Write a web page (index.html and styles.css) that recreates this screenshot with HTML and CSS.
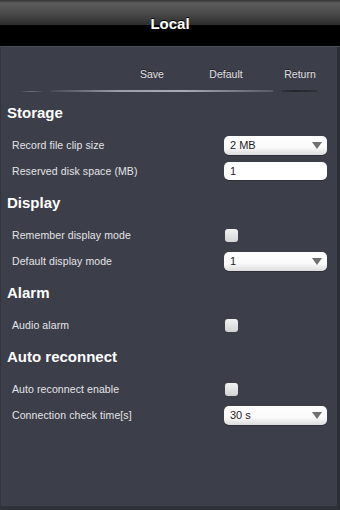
FILE: index.html
```html
<!DOCTYPE html>
<html>
<head>
<meta charset="utf-8">
<link rel="stylesheet" href="styles.css">
</head>
<body>
<div class="app">
  <header class="titlebar"><span class="title">Local</span></header>
  <main class="panel">
    <nav class="toolbar">
      <span class="tb-btn">Save</span>
      <span class="tb-btn">Default</span>
      <span class="tb-btn">Return</span>
    </nav>
    <div class="divider">
      <span class="seg seg-a"></span>
      <span class="seg seg-b"></span>
      <span class="seg seg-c"></span>
    </div>

    <section class="group">
      <h2 class="group-title">Storage</h2>
      <div class="row">
        <span class="label">Record file clip size</span>
        <div class="control"><div class="select"><span>2 MB</span><i class="arrow"></i></div></div>
      </div>
      <div class="row">
        <span class="label">Reserved disk space (MB)</span>
        <div class="control"><div class="input">1</div></div>
      </div>
    </section>

    <section class="group">
      <h2 class="group-title">Display</h2>
      <div class="row">
        <span class="label">Remember display mode</span>
        <div class="control"><span class="check"></span></div>
      </div>
      <div class="row">
        <span class="label">Default display mode</span>
        <div class="control"><div class="select"><span>1</span><i class="arrow"></i></div></div>
      </div>
    </section>

    <section class="group">
      <h2 class="group-title">Alarm</h2>
      <div class="row">
        <span class="label">Audio alarm</span>
        <div class="control"><span class="check"></span></div>
      </div>
    </section>

    <section class="group">
      <h2 class="group-title">Auto reconnect</h2>
      <div class="row">
        <span class="label">Auto reconnect enable</span>
        <div class="control"><span class="check"></span></div>
      </div>
      <div class="row">
        <span class="label">Connection check time[s]</span>
        <div class="control"><div class="select"><span>30 s</span><i class="arrow"></i></div></div>
      </div>
    </section>
  </main>
</div>
</body>
</html>
```

FILE: styles.css
```css
* { box-sizing: border-box; }
html, body { margin: 0; padding: 0; }
body {
  width: 340px;
  height: 510px;
  overflow: hidden;
  background: #2b2d34;
  font-family: "Liberation Sans", Arial, Helvetica, sans-serif;
}
.app {
  display: flex;
  flex-direction: column;
  height: 510px;
}
.titlebar {
  height: 47px;
  flex: none;
  display: flex;
  align-items: center;
  justify-content: center;
  background: linear-gradient(#333 0, #5c5c5c 3px, #494949 30%, #2c2c2c 54%, #000 54%, #000 100%);
  border-bottom: 1px solid #4a4d58;
}
.title {
  color: #fff;
  font-weight: bold;
  font-size: 15px;
  text-shadow: 0 -1px 0 #000;
  padding-top: 1px;
}
.panel {
  flex: 1;
  background: #3c3e49;
  border-left: 1px solid #33353e;
  border-right: 3px solid #2c2e35;
  border-bottom: 4px solid #30323a;
}
.toolbar {
  height: 41px;
  display: flex;
  justify-content: flex-end;
  align-items: flex-end;
  padding-right: 0;
  padding-bottom: 7px;
}
.tb-btn {
  width: 74px;
  text-align: center;
  color: #e2e3e6;
  font-size: 10.5px;
  line-height: 14px;
  text-shadow: 0 -1px 0 rgba(0,0,0,0.5);
}
.divider {
  height: 6px;
  display: flex;
  align-items: center;
  padding-left: 19px;
}
.seg { height: 1px; display: block; }
.seg-a {
  width: 22px;
  background: linear-gradient(90deg, rgba(120,124,138,0), rgba(120,124,138,0.8), rgba(120,124,138,0.2));
}
.seg-b {
  margin-left: 8px;
  width: 223px;
  height: 2px;
  background: linear-gradient(90deg, rgba(150,154,168,0.1), #9a9eaa 30%, #a8acb8 60%, rgba(150,154,168,0.3));
}
.seg-c {
  margin-left: 8px;
  width: 36px;
  height: 2px;
  background: linear-gradient(90deg, rgba(30,31,36,0.3), #23252b 40%, rgba(30,31,36,0.4));
}
.group-title {
  margin: 0;
  padding: 9px 0 9px 6px;
  height: 38px;
  font-size: 15px;
  line-height: 20px;
  font-weight: bold;
  color: #fff;
}
.row {
  height: 26px;
  display: flex;
  align-items: center;
  padding-left: 11px;
}
.label {
  flex: 1;
  color: #e4e5e8;
  font-size: 10.5px;
  letter-spacing: 0.1px;
}
.control {
  width: 113px;
  flex: none;
  display: flex;
  align-items: center;
}
.select, .input {
  width: 103px;
  height: 19px;
  border-radius: 5px;
  background: linear-gradient(#ffffff 0, #fafafa 60%, #dcdcdc 100%);
  display: flex;
  align-items: center;
  justify-content: space-between;
  padding: 0 5px 0 6px;
  font-size: 11px;
  color: #222;
  box-shadow: 0 1px 0 rgba(0,0,0,0.25);
}
.input {
  height: 18px;
  background: #fff;
  justify-content: flex-start;
}
.arrow {
  width: 0;
  height: 0;
  border-left: 5px solid transparent;
  border-right: 5px solid transparent;
  border-top: 7px solid #707070;
  margin-top: 1px;
}
.check {
  width: 13px;
  height: 13px;
  margin-left: 1px;
  border-radius: 3px;
  background: linear-gradient(#f2f2f2, #d4d4d4);
  display: block;
}
```
